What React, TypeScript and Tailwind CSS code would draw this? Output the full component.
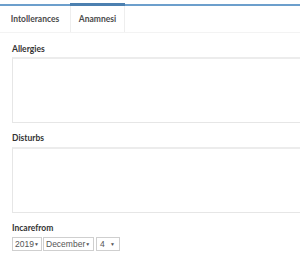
import React from "react";

export default function App() {
  const font = { fontFamily: "Lato, 'Open Sans', sans-serif" };
  const sel = { fontFamily: "'Liberation Sans', Arial, sans-serif" };
  return (
    <div className="w-[300px] h-[253px] bg-white overflow-hidden text-[#333]" style={font}>
      <div className="h-[4px]" />
      <div className="h-[2px] bg-[#6c9fcc] relative">
        <div className="absolute left-[70px] w-[55px] top-[-1px] h-[3px] bg-[#4c80b0]" />
      </div>
      <div className="flex h-[27px] border-b border-[#f3f3f3]">
        <div className="w-[70px] flex items-center justify-center text-[8.5px] font-bold text-[#4a4a4a]">
          Intollerances
        </div>
        <div className="w-[55px] flex items-center justify-center text-[8.5px] font-bold text-[#4a4a4a] border-l border-r border-[#eeeeee] bg-white">
          Anamnesi
        </div>
      </div>
      <div className="pl-[12px] pt-[10px]">
        <div className="text-[8.5px] font-bold text-[#333] leading-[12px]">Allergies</div>
        <div className="mt-[2px] h-[66px] w-[300px] border border-[#e6e6e6] border-t-[2px] border-t-[#ececec] bg-white" />
        <div className="mt-[9px] text-[8.5px] font-bold text-[#333] leading-[12px]">Disturbs</div>
        <div className="mt-[3px] h-[66px] w-[300px] border border-[#e6e6e6] border-t-[2px] border-t-[#ececec] bg-white" />
        <div className="mt-[9px] text-[8.5px] font-bold text-[#333] leading-[12px]">Incarefrom</div>
        <div className="mt-[3px] flex items-center" style={sel}>
          <div className="w-[30px] h-[14px] mr-[1px] border border-[#cfcfcf] flex items-center justify-between pl-[2px] pr-[4px] text-[8.5px] leading-none text-[#555] bg-white">
            <span>2019</span>
            <span className="text-[5px]">▼</span>
          </div>
          <div className="w-[51px] h-[14px] mr-[2px] border border-[#cfcfcf] flex items-center justify-between pl-[2px] pr-[4px] text-[8.5px] leading-none text-[#555] bg-white">
            <span>December</span>
            <span className="text-[5px]">▼</span>
          </div>
          <div className="w-[24px] h-[14px] border border-[#cfcfcf] flex items-center justify-between pl-[3px] pr-[4px] text-[8.5px] leading-none text-[#555] bg-white">
            <span>4</span>
            <span className="text-[5px]">▼</span>
          </div>
        </div>
      </div>
    </div>
  );
}
